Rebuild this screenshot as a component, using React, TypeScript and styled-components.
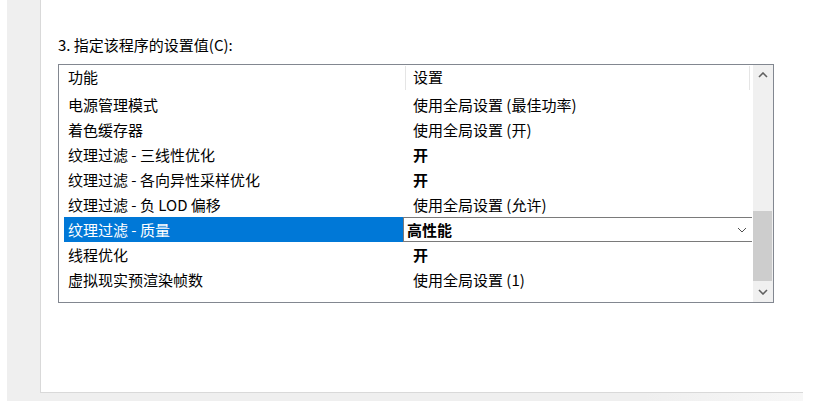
import styled, { createGlobalStyle } from "styled-components";

type Row = { name: string; value: string; bold?: boolean };

const ROWS: Row[] = [
  { name: "电源管理模式", value: "使用全局设置 (最佳功率)" },
  { name: "着色缓存器", value: "使用全局设置 (开)" },
  { name: "纹理过滤 - 三线性优化", value: "开", bold: true },
  { name: "纹理过滤 - 各向异性采样优化", value: "开", bold: true },
  { name: "纹理过滤 - 负 LOD 偏移", value: "使用全局设置 (允许)" },
  { name: "纹理过滤 - 质量", value: "高性能", bold: true },
  { name: "线程优化", value: "开", bold: true },
  { name: "虚拟现实预渲染帧数", value: "使用全局设置 (1)" },
];

const SELECTED = 5;

const GlobalStyle = createGlobalStyle`
  html, body {
    margin: 0;
    padding: 0;
    background: #fff;
  }
  body {
    font-family: "Noto Sans CJK SC", "Noto Sans", sans-serif;
    font-size: 15px;
    color: #000;
  }
`;

const Chevron = ({ dir, thin }: { dir: "up" | "down"; thin?: boolean }) => (
  <svg width="10" height="6" viewBox="0 0 10 6">
    <path
      d={dir === "up" ? "M1 5 L5 1 L9 5" : "M1 1 L5 5 L9 1"}
      fill="none"
      stroke={thin ? "#505050" : "#606060"}
      strokeWidth={thin ? 1 : 1.6}
    />
  </svg>
);

const App = () => {
  return (
    <>
      <GlobalStyle />
      <Page>
        <Strip />
        <Frame>
          <Panel>
            <Label>3. 指定该程序的设置值(C):</Label>
            <ListBox>
              <List>
                <Header>
                  <HeadCell $w={347} $pad={9}>功能</HeadCell>
                  <HeadCell $w={344} $pad={7}>设置</HeadCell>
                </Header>
                {ROWS.map((row, i) =>
                  i === SELECTED ? (
                    <ItemRow key={i}>
                      <NameCell $selected>{row.name}</NameCell>
                      <Combo>
                        <ComboText>{row.value}</ComboText>
                        <Chevron dir="down" thin />
                      </Combo>
                    </ItemRow>
                  ) : (
                    <ItemRow key={i}>
                      <NameCell>{row.name}</NameCell>
                      <ValueCell $bold={row.bold}>{row.value}</ValueCell>
                    </ItemRow>
                  )
                )}
              </List>
              <ScrollBar>
                <ArrowBtn>
                  <Chevron dir="up" />
                </ArrowBtn>
                <Track>
                  <Thumb />
                </Track>
                <ArrowBtn>
                  <Chevron dir="down" />
                </ArrowBtn>
              </ScrollBar>
            </ListBox>
          </Panel>
        </Frame>
      </Page>
    </>
  );
};

const Page = styled.div`
  display: flex;
  width: 820px;
  height: 401px;
  overflow: hidden;
`;

const Strip = styled.div`
  width: 7px;
  background: #fff;
`;

const Frame = styled.div`
  display: flex;
  width: 796px;
  padding: 0 0 8px 33px;
  box-sizing: border-box;
  background: linear-gradient(to right, #efefef 0%, #efefef 80%, #f7f7f7 100%);
`;

const Panel = styled.div`
  flex: 1;
  background: #fff;
  border-left: 1px solid #d9d9d9;
  border-bottom: 1px solid #d9d9d9;
  padding: 35px 0 0 17px;
`;

const Label = styled.div`
  height: 20px;
  line-height: 20px;
  margin-bottom: 9px;
`;

const ListBox = styled.div`
  display: flex;
  width: 716px;
  height: 239px;
  box-sizing: border-box;
  border: 1px solid #828790;
`;

const List = styled.div`
  flex: 1;
  display: flex;
  flex-direction: column;
`;

const Header = styled.div`
  display: flex;
  height: 27px;
`;

const HeadCell = styled.div<{ $w: number; $pad: number }>`
  width: ${(p) => p.$w}px;
  box-sizing: border-box;
  padding-left: ${(p) => p.$pad}px;
  margin: 1px 0 2px;
  line-height: 22px;
  border-right: 1px solid #e5e5e5;
`;

const ItemRow = styled.div`
  display: flex;
  height: 25px;
  padding-left: 5px;
`;

const NameCell = styled.div<{ $selected?: boolean }>`
  width: 339px;
  padding-left: 4px;
  box-sizing: border-box;
  line-height: 25px;
  white-space: nowrap;
  background: ${(p) => (p.$selected ? "#0078d7" : "transparent")};
  color: ${(p) => (p.$selected ? "#fff" : "#000")};
`;

const ValueCell = styled.div<{ $bold?: boolean }>`
  flex: 1;
  padding-left: 10px;
  line-height: 25px;
  white-space: nowrap;
  font-weight: ${(p) => (p.$bold ? 700 : 400)};
`;

const Combo = styled.div`
  flex: 1;
  display: flex;
  align-items: center;
  justify-content: space-between;
  padding: 0 5px 0 3px;
  border: 1px solid #7a7a7a;
  border-right: none;
  background: #fff;
`;

const ComboText = styled.span`
  font-weight: 700;
  line-height: 23px;
`;

const ScrollBar = styled.div`
  display: flex;
  flex-direction: column;
  width: 20px;
  margin-left: 1px;
  background: #f0f0f0;
`;

const ArrowBtn = styled.div`
  height: 20px;
  display: flex;
  align-items: center;
  justify-content: center;
`;

const Track = styled.div`
  flex: 1;
  padding-top: 126px;
  padding-bottom: 1px;
  display: flex;
  flex-direction: column;
`;

const Thumb = styled.div`
  flex: 1;
  margin-right: 1px;
  background: #cdcdcd;
`;

export default App;
